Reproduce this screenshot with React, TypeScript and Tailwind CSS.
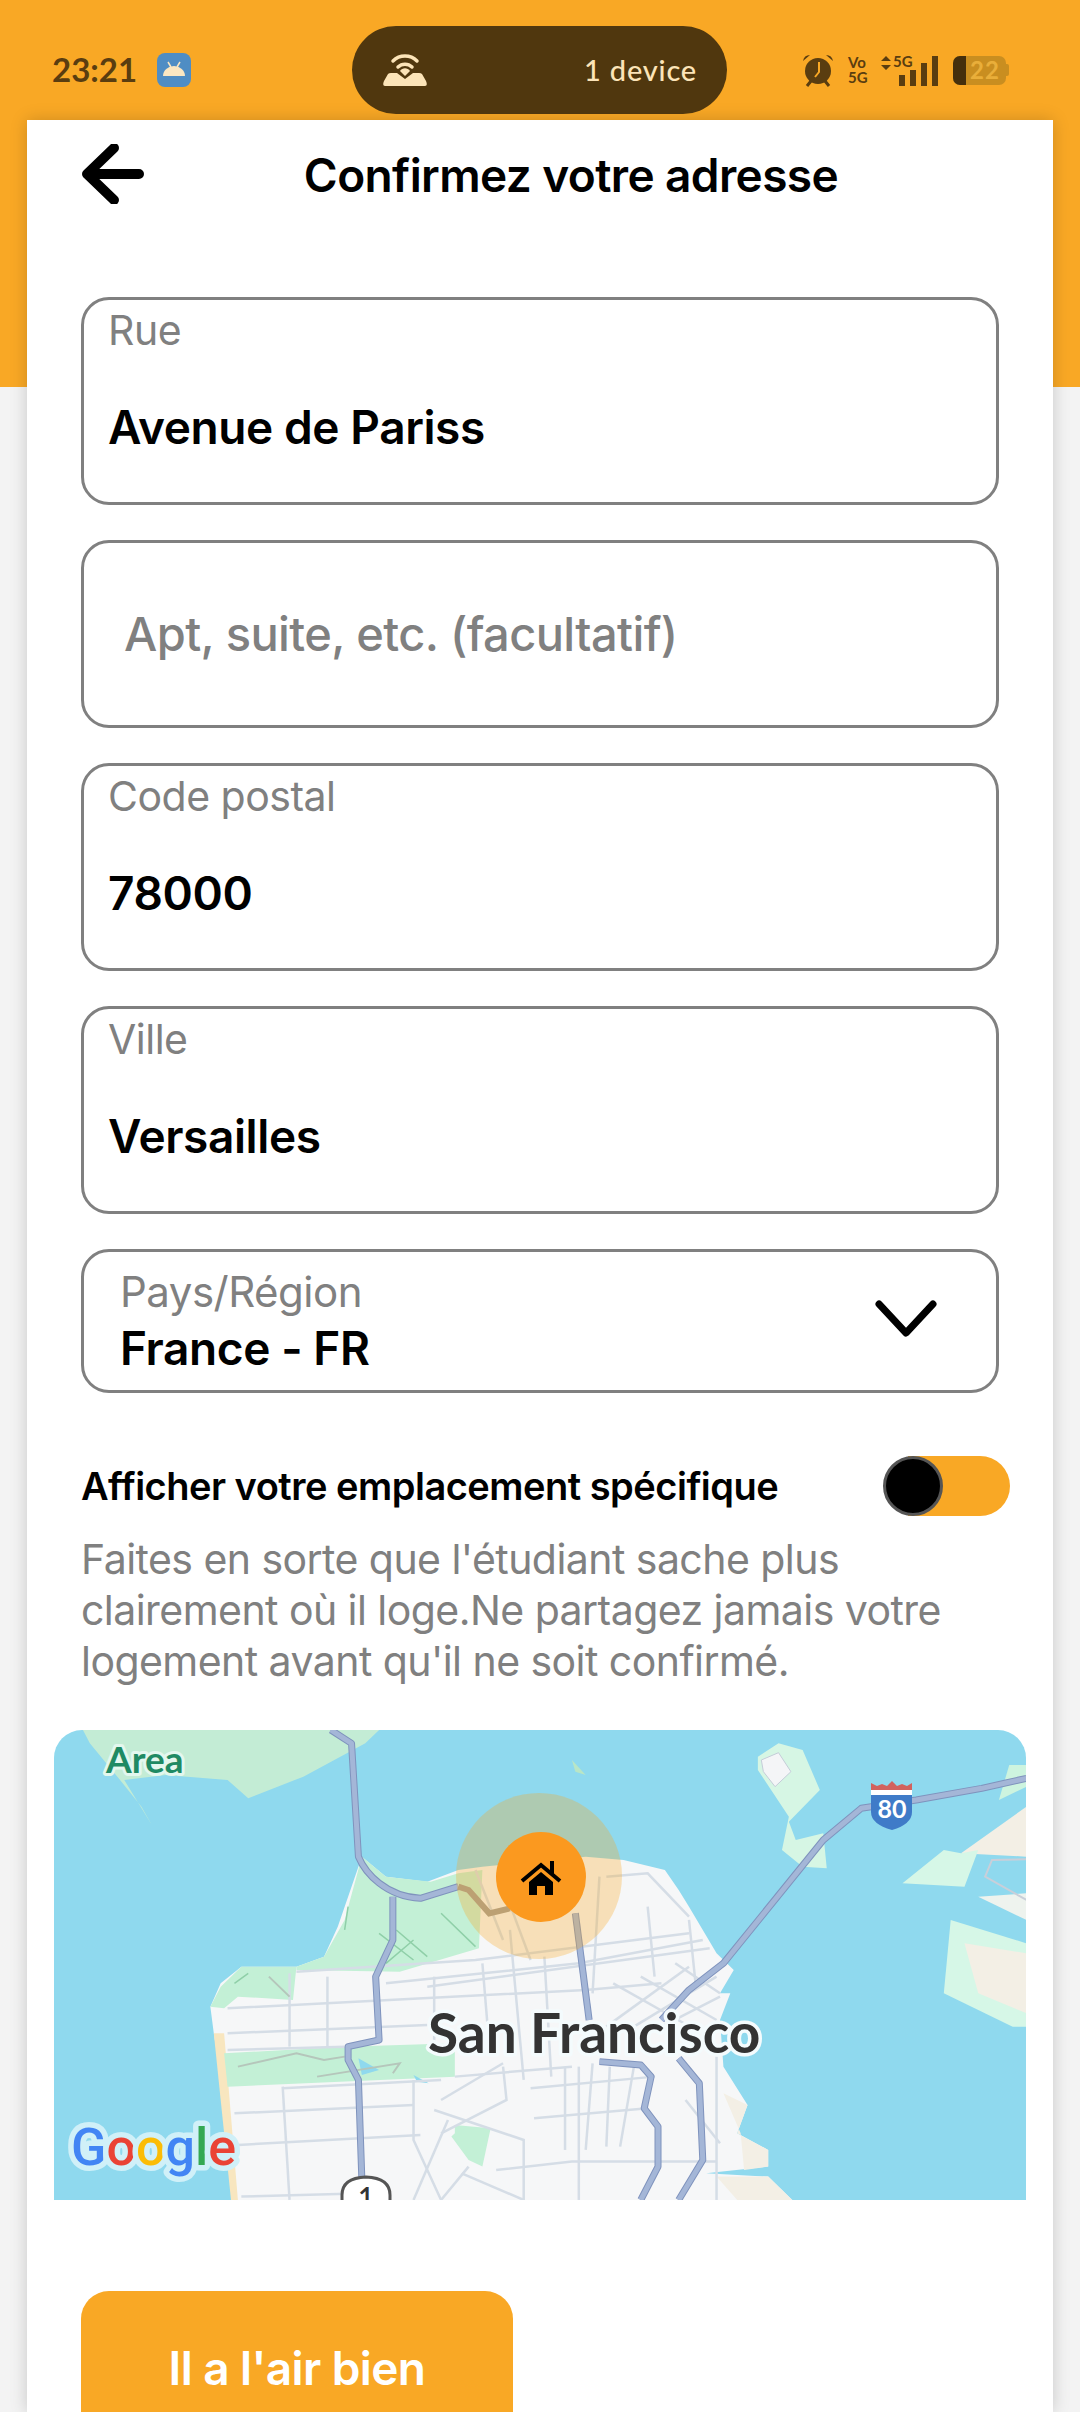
const sans = "font-['Inter','Liberation_Sans',sans-serif]";
const hand = "font-['Lato','Noto_Sans',sans-serif]";

function TextField({ label, value }: { label: string; value: string }) {
  return (
    <div className="flex h-[208px] flex-col rounded-[28px] border-[3px] border-[#808080] pl-[24px]">
      <span className="mt-[6px] text-[41px] leading-[48px] tracking-[-0.5px] text-[#808080]">{label}</span>
      <span className="mt-[46px] text-[46px] leading-[54px] font-semibold tracking-[-0.4px] text-black">{value}</span>
    </div>
  );
}

function StatusBar() {
  return (
    <div className={`relative flex h-[88px] items-center ${hand} mt-[26px] mb-[6px]`}>
      <span className="ml-[52px] w-[105px] text-[33px] font-bold text-[#5a3d10]">23:21</span>
      <div className="flex h-[34px] w-[34px] items-center justify-center rounded-[8px] bg-[#4f8dc4]">
        <svg width="24" height="18" viewBox="0 0 24 18">
          <path d="M1 15a11 10 0 0 1 22 0Z" fill="#fbe7c2" />
          <path d="M6 1l3 5M18 1l-3 5" stroke="#fbe7c2" strokeWidth="1.5" />
        </svg>
      </div>
      <div className="ml-[161px] flex h-[88px] w-[375px] items-center justify-between rounded-full bg-[#50370e] pr-[30px] pl-[31px]">
        <svg width="44" height="36" viewBox="0 0 44 36" fill="none">
          <path d="M10 9a17 17 0 0 1 24 0M15 15a10 10 0 0 1 14 0" stroke="#fce4b8" strokeWidth="3.5" strokeLinecap="round" />
          <path d="M22 24l-5-5a6 6 0 0 1 10 0Z" fill="#fce4b8" />
          <path d="M2 34q-3 0-1-5l4-7q1-1 3-1h6l8 6 8-6h6q2 0 3 1l4 7q2 5-1 5Z" fill="#fce4b8" />
        </svg>
        <span className="text-[29px] font-medium tracking-[0.8px] text-[#fce4b8]">1 device</span>
      </div>
      <div className="ml-[75px] flex items-center">
        <svg width="32" height="34" viewBox="0 0 32 34" fill="#5a3d10">
          <circle cx="16" cy="18" r="13" />
          <path d="M1 8q1-6 7-6ZM31 8q-1-6-7-6Z" />
          <path d="M5 33l4-5M27 33l-4-5" stroke="#5a3d10" strokeWidth="3" />
          <path d="M17 9v10l-4 5" stroke="#f9a825" strokeWidth="2" fill="none" />
        </svg>
        <span className="ml-[14px] flex w-[20px] flex-col text-[15px] leading-[15px] font-bold text-[#5a3d10]">
          <span>Vo</span>
          <span>5G</span>
        </span>
        <div className="relative ml-[12px] h-[32px] w-[58px]">
          <svg className="absolute top-[2px] left-0" width="12" height="14" viewBox="0 0 12 14" fill="#5a3d10">
            <path d="M6 0l5 5H1ZM6 14l5-5H1Z" />
          </svg>
          <span className="absolute top-0 left-[13px] text-[15px] leading-[15px] font-bold text-[#5a3d10]">5G</span>
          <div className="absolute right-0 bottom-0 flex items-end gap-[5px]">
            <span className="h-[11px] w-[6px] bg-[#5a3d10]" />
            <span className="h-[16px] w-[6px] bg-[#5a3d10]" />
            <span className="h-[23px] w-[6px] bg-[#5a3d10]" />
            <span className="h-[30px] w-[6px] bg-[#5a3d10]" />
          </div>
        </div>
        <div className="ml-[15px] flex h-[29px] w-[53px] items-center overflow-hidden rounded-[7px] bg-[#c98e20]">
          <span className="h-full w-[13px] bg-[#452f0c]" />
          <span className="ml-[4px] text-[24px] leading-none font-bold tracking-[1px] text-[#e9ae3a]">22</span>
        </div>
        <span className="h-[12px] w-[3px] rounded-r-[2px] bg-[#c98e20]" />
      </div>
    </div>
  );
}

const streets = [
  "M330 925L850 870L960 850", "M330 1000L620 975", "M330 1050L500 1040", "M560 850L840 790L1020 720", "M430 815L690 780L1000 700",
  "M620 860L1030 745", "M340 1240L600 1215", "M345 1335L610 1305", "M410 1165L640 1140", "M660 1130L830 1100",
  "M770 1165L950 1130", "M775 1255L940 1225", "M720 1410L830 1385L1040 1385", "M350 1490L530 1480",
  "M475 830V1040", "M420 820V1040", "M410 1160L420 1500", "M600 1140L600 1320L640 1500", "M630 830V1030", "M700 790L710 1040",
  "M740 690L760 1140", "M790 770L800 1130", "M870 530L860 880", "M940 620L950 830", "M1000 660L1010 860",
  "M820 1100V1350", "M840 1100V1500", "M860 1090L850 1350", "M885 1100L880 1340", "M920 1100L900 1340",
  "M640 1200L730 1090", "M730 1100L735 1200L640 1300", "M630 1230L760 1320V1500", "M650 1260L600 1500", "M995 1200L1045 1330",
  "M1040 1070V1500", "M880 980L1000 800", "M920 980L1040 830", "M960 980L1045 890", "M890 850L1010 990", "M930 830L1040 960",
  "M980 790L1045 880", "M690 510L730 720", "M725 530L770 780", "M880 530L940 520L1000 650",
  "M670 1420L760 1500", "M680 1400L640 1500",
];

const hwy = [
  "M480 90L510 130L520 470C530 520 560 590 610 595L665 560",
  "M570 590V720L545 830L550 1020L505 1040V1080L520 1140L525 1440",
  "M1490 235L1425 265L1330 300L1250 325L1195 420L1050 790L1000 870L960 960",
  "M835 640L855 960",
  "M870 1085L930 1095L945 1130L935 1225L955 1280L955 1400L930 1500",
  "M985 1075L1015 1150L1020 1380L985 1500",
];

function MapCanvas() {
  return (
    <svg className="block" width="972" height="470" viewBox="0 0 972 470">
      <rect width="972" height="470" fill="#8fd9ee" />
      <g transform="translate(-53.7 -30) scale(0.6887 0.3333)">
        {/* marin */}
        <polygon points="120,90 550,90 530,130 440,230 360,295 330,240 240,225 180,240 220,375 205,320 170,230 130,130" fill="#c3ecd5" />
        <polygon points="830,180 850,225 835,215" fill="#b9e6c6" />
        {/* treasure island */}
        <polygon points="1100,170 1130,130 1165,150 1190,270 1145,365 1155,420 1195,400 1200,505 1165,500 1135,450 1145,350 1100,210" fill="#d6f6e4" />
        <polygon points="1105,180 1130,158 1148,215 1125,260 1108,215" fill="#f4f5f7" stroke="#c4ccd8" vectorEffect="non-scaling-stroke" />
        {/* east bay */}
        <polygon points="1490,320 1395,460 1490,470" fill="#f3efe5" />
        <polygon points="1490,195 1465,195 1450,300 1490,260" fill="#cdf4df" />
        <polygon points="1310,550 1370,450 1395,460 1420,450 1400,560" fill="#d6f7e7" />
        <polygon points="1490,580 1420,590 1490,660" fill="#eef3ee" />
        <polygon points="1380,660 1490,730 1490,980 1470,980 1370,880" fill="#d6f7e7" />
        <polygon points="1400,730 1490,760 1490,940 1420,880" fill="#f3efe5" />
        <polyline points="1490,478 1440,480 1430,530 1490,600" fill="none" stroke="#c9cfd9" strokeWidth="2" vectorEffect="non-scaling-stroke" />
        {/* sf */}
        <polygon points="305,920 320,850 350,800 430,800 470,770 490,680 510,560 525,470 560,530 620,545 665,510 700,500 850,470 905,480 965,510 985,570 1000,620 1040,760 1065,810 1045,880 1060,880 1045,960 1050,1100 1085,1215 1070,1300 1115,1350 1115,1400 1025,1420 1115,1430 1150,1500 340,1500 325,1200 310,1000" fill="#f6f7f8" />
        <polygon points="1050,1180 1085,1215 1070,1300 1115,1350 1115,1400 1080,1410 1075,1300" fill="#f3efe5" />
        <polygon points="1040,1430 1115,1430 1150,1500 1070,1500" fill="#f3efe5" />
        <polygon points="310,1000 325,1000 345,1500 335,1500 320,1200" fill="#f8e6bf" />
        <polygon points="305,920 320,860 350,800 430,800 425,900 345,890 325,925" fill="#c3f0d6" />
        <polygon points="430,800 470,770 500,660 525,470 560,530 625,545 665,520 700,510 695,745 580,815 430,810" fill="#c3f0d6" />
        <polygon points="325,1060 500,1040 660,1030 660,1130 330,1160" fill="#c3f0d6" />
        <polygon points="660,1300 660,1275 712,1285 700,1400 680,1380 655,1310" fill="#c3f0d6" />
        <polygon points="600,1125 622,1150 605,1145" fill="#8fd9ee" />
        <polygon points="520,1075 550,1110 525,1125" fill="#8fd9ee" />
        {streets.map((d) => (
          <path key={d} d={d} fill="none" stroke="#d5dde6" strokeWidth="2.5" vectorEffect="non-scaling-stroke" />
        ))}
        <path d="M345 1100L430 1060L470 1080L500 1070M460 1130L580 1090L570 1120M390 830L420 890" fill="none" stroke="#b5c6bb" strokeWidth="2" vectorEffect="non-scaling-stroke" />
        <path d="M550 700L600 780M575 690L620 770M600 720L560 790M640 640L690 740M505 620L500 690M360 820L340 850" fill="none" stroke="#8fcfa8" strokeWidth="1.5" vectorEffect="non-scaling-stroke" />
        {hwy.map((d) => (
          <g key={d}>
            <path d={d} fill="none" stroke="#7f93bd" strokeWidth="7" strokeLinejoin="round" vectorEffect="non-scaling-stroke" />
            <path d={d} fill="none" stroke="#a4b6d7" strokeWidth="5" strokeLinejoin="round" vectorEffect="non-scaling-stroke" />
          </g>
        ))}
        <path d="M665 560L680 570L710 640L740 625" fill="none" stroke="#a39c95" strokeWidth="6" vectorEffect="non-scaling-stroke" />
      </g>

      {/* location radius and pin */}
      <circle cx="485" cy="146" r="83" fill="#f9a825" fillOpacity="0.3" />
      <circle cx="487" cy="147" r="45" fill="#fb991f" />
      <g transform="translate(487 148)">
        <path d="M-19 3L0 -13L19 3" fill="none" stroke="#000" strokeWidth="4" />
        <rect x="9" y="-17" width="4" height="14" />
        <path d="M-12 4L0 -6L12 4V17H4V8H-4V17H-12Z" />
      </g>

      {/* labels */}
      <g className="font-['Lato','Noto_Sans',sans-serif]" strokeLinejoin="round">
        <text x="52" y="43" fontSize="37" fontWeight="700" fill="#1f8a63" stroke="#e3f7ee" strokeWidth="6" style={{ paintOrder: "stroke" }}>Area</text>
        <text x="374" y="323" fontSize="55" fontWeight="700" fill="#333" stroke="#f4fbfd" strokeWidth="7" style={{ paintOrder: "stroke" }}>San Francisco</text>
      </g>
      <text x="17" y="435" fontSize="52" fontWeight="500" className="font-['Roboto',sans-serif]" stroke="#d0f0f8" strokeWidth="11" strokeLinejoin="round" style={{ paintOrder: "stroke" }}>
        <tspan fill="#4285f4">G</tspan>
        <tspan fill="#ea4335">o</tspan>
        <tspan fill="#fbbc05">o</tspan>
        <tspan fill="#4285f4">g</tspan>
        <tspan fill="#34a853">l</tspan>
        <tspan fill="#ea4335">e</tspan>
      </text>

      {/* interstate 80 */}
      <path d="M817 53l6 3 5-2 5 2 5-5 5 5 5-2 5 2 5-3V60H817Z" fill="#d2625e" />
      <rect x="817" y="60" width="41" height="5" fill="#fff" />
      <path d="M817 65H858V82Q858 94 838 100Q817 94 817 82Z" fill="#3f7bc8" />
      <text x="838" y="88" textAnchor="middle" fontSize="25" fontWeight="700" fill="#fff" className="font-['Lato',sans-serif]">80</text>

      {/* route 1 */}
      <path d="M288 474V465Q288 448 312 447Q336 448 336 465V474Z" fill="#fff" stroke="#555" strokeWidth="3" />
      <text x="312" y="478" textAnchor="middle" fontSize="28" fontWeight="600" fill="#333" className="font-['Lato',sans-serif]">1</text>
    </svg>
  );
}

export default function App() {
  return (
    <div className={`relative h-[2412px] w-[1080px] overflow-hidden bg-[#f3f3f3] ${sans}`}>
      <div className="absolute inset-x-0 top-0 h-[387px] bg-[#f9a825]" />
      <div className="relative">
        <StatusBar />
        <main className="mx-[27px] h-[2292px] bg-white px-[54px] shadow-[0_0_16px_rgba(0,0,0,0.18)]">
          <header className="relative flex h-[177px] justify-center pt-[23px]">
            <svg className="absolute top-[24px] left-[1px]" width="64" height="60" viewBox="0 0 64 60" fill="none">
              <path d="M32 4L5 30L32 56M6 30H57" stroke="#000" strokeWidth="10" strokeLinecap="round" strokeLinejoin="round" />
            </svg>
            <h1 className="pl-[62px] text-[46px] leading-[64px] font-semibold tracking-[-0.6px] text-black">Confirmez votre adresse</h1>
          </header>

          <div className="flex flex-col gap-[35px]">
            <TextField label="Rue" value="Avenue de Pariss" />
            <div className="flex h-[188px] items-center rounded-[28px] border-[3px] border-[#808080] pl-[40px]">
              <span className="text-[47px] leading-[54px] font-medium tracking-[-0.6px] text-[#808080]">Apt, suite, etc. (facultatif)</span>
            </div>
            <TextField label="Code postal" value="78000" />
            <TextField label="Ville" value="Versailles" />
            <div className="flex h-[144px] items-center justify-between rounded-[28px] border-[3px] border-[#808080] pr-[58px] pl-[36px]">
              <div className="flex flex-col">
                <span className="text-[42px] leading-[50px] tracking-[-0.5px] text-[#808080]">Pays/Région</span>
                <span className="mt-[4px] text-[46px] leading-[54px] font-semibold tracking-[-0.4px] text-black">France - FR</span>
              </div>
              <svg className="-mt-[4px]" width="64" height="40" viewBox="0 0 64 40" fill="none">
                <path d="M5 5L32 34L59 5" stroke="#000" strokeWidth="7" strokeLinecap="round" strokeLinejoin="round" />
              </svg>
            </div>
          </div>

          <div className="mt-[63px] flex items-center justify-between">
            <span className="text-[38px] leading-[48px] font-semibold tracking-[-0.5px] text-black">Afficher votre emplacement spécifique</span>
            <div className="relative -mr-[11px] h-[60px] w-[102px] rounded-r-full bg-[#f9a825]">
              <span className="absolute top-0 -left-[25px] h-[60px] w-[60px] rounded-full border-[3px] border-[#555] bg-black" />
            </div>
          </div>
          <p className="mt-[18px] text-[41px] leading-[51px] tracking-[-0.55px] text-[#808080]">
            Faites en sorte que l'étudiant sache plus
            <br />
            clairement où il loge.Ne partagez jamais votre
            <br />
            logement avant qu'il ne soit confirmé.
          </p>

          <div className="-mx-[27px] mt-[43px] overflow-hidden rounded-t-[28px]">
            <MapCanvas />
          </div>

          <button type="button" className="mt-[91px] h-[160px] w-[432px] rounded-t-[28px] bg-[#f9a825] pb-[6px] text-[46px] font-semibold tracking-[-0.6px] text-white">
            Il a l'air bien
          </button>
        </main>
      </div>
    </div>
  );
}
